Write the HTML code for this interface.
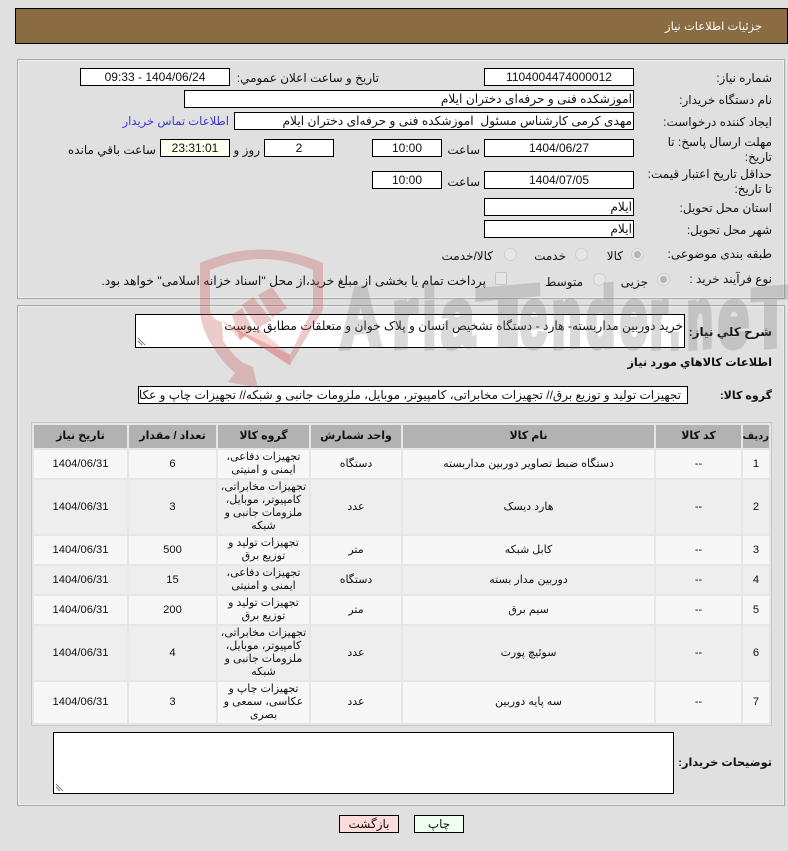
<!DOCTYPE html>
<html lang="fa" dir="rtl">
<head>
<meta charset="utf-8">
<title>جزئیات اطلاعات نیاز</title>
<style>
html,body{margin:0;padding:0}
body{position:relative;width:788px;height:851px;overflow:hidden;background:#e0e0e0;font-family:"Liberation Sans","DejaVu Sans",sans-serif;font-size:12px;color:#111}
.abs,.t,.box,.r,.panel{position:absolute}
.t{white-space:pre;line-height:16px;height:16px}
.panel{border:1px solid #a9a9a9;box-shadow:inset 0 0 0 1px #eee}
.box{box-sizing:border-box;background:#fff;border:1px solid #000;white-space:pre;overflow:hidden;text-align:center;line-height:17px;font-size:12px;height:18px}
.box.a{text-align:right;font-size:12.2px;padding-right:1px}
.b{font-weight:bold}
.r{width:11px;height:11px;border-radius:50%;background:#e6e6e6;border:1px solid #cfcfcf}
.r.c:after{content:"";position:absolute;left:2px;top:2px;width:7px;height:7px;border-radius:50%;background:#b4b4b4}
table{position:absolute;left:31px;top:422px;width:741px;table-layout:fixed;border-collapse:separate;border-spacing:2px;background:#e6e6e6;border:1px solid #c8c8c8;box-sizing:border-box;font-size:11px}
th,td{padding:0;text-align:center;overflow:hidden;line-height:13px}
th{background:#b2b2b2;height:23px;font-size:11px}
tr.o td{background:#f7f7f7}
tr.e td{background:#eee}
td.n{font-size:11.2px}
.grip{position:absolute;left:1px;bottom:1px}
.btn{position:absolute;box-sizing:border-box;top:815px;height:18px;border:1px solid #000;text-align:center;line-height:17px}
.wm text{font-family:"Liberation Sans",sans-serif;font-weight:bold;font-size:84px;fill:rgb(110,110,110);stroke:rgb(110,110,110);stroke-width:5px;vector-effect:non-scaling-stroke;direction:ltr}
</style>
</head>
<body>

<!-- header -->
<div class="abs" style="left:15px;top:8px;width:773px;height:36px;box-sizing:border-box;background:#8b6c42;border:1px solid #000"></div>
<div class="t" style="right:26px;top:19px;color:#fff;font-size:11.5px">جزئیات اطلاعات نیاز</div>

<!-- panels -->
<div class="panel" style="left:17px;top:59px;width:766px;height:238px;background:transparent"></div>
<div class="panel" style="left:17px;top:305px;width:766px;height:499px;background:transparent"></div>

<!-- labels -->
<div class="t" style="right:16px;top:70px">شماره نیاز:</div>
<div class="t" style="right:16px;top:92px">نام دستگاه خریدار:</div>
<div class="t" style="right:16px;top:114px">ایجاد کننده درخواست:</div>
<div class="t" style="right:16px;top:134px">مهلت ارسال پاسخ: تا</div>
<div class="t" style="right:16px;top:149px">تاریخ:</div>
<div class="t" style="right:16px;top:166px">حداقل تاریخ اعتبار قیمت:</div>
<div class="t" style="right:16px;top:181px">تا تاریخ:</div>
<div class="t" style="right:16px;top:200px">استان محل تحویل:</div>
<div class="t" style="right:16px;top:222px">شهر محل تحویل:</div>
<div class="t" style="right:16px;top:246px">طبقه بندی موضوعی:</div>
<div class="t" style="right:16px;top:271px">نوع فرآیند خرید :</div>

<!-- row 1 -->
<div class="box" style="left:484px;top:68px;width:150px">1104004474000012</div>
<div class="t" style="right:409px;top:70px">تاریخ و ساعت اعلان عمومي:</div>
<div class="box" style="left:80px;top:68px;width:150px">1404/06/24 - 09:33</div>

<!-- row 2 -->
<div class="box a" style="left:184px;top:90px;width:450px">اموزشکده فنی و حرفه‌ای دختران ایلام</div>

<!-- row 3 -->
<div class="box a" style="left:234px;top:112px;width:400px">مهدی کرمی کارشناس مسئول  اموزشکده فنی و حرفه‌ای دختران ایلام</div>
<div class="t" style="right:559px;top:114px;color:#3a35d0;font-size:11.6px">اطلاعات تماس خریدار</div>

<!-- row 4 -->
<div class="box" style="left:484px;top:139px;width:150px">1404/06/27</div>
<div class="t" style="right:308px;top:142px">ساعت</div>
<div class="box" style="left:372px;top:139px;width:70px">10:00</div>
<div class="box" style="left:264px;top:139px;width:70px">2</div>
<div class="t" style="right:528px;top:142px">روز و</div>
<div class="box" style="left:160px;top:139px;width:70px;background:#fffff0">23:31:01</div>
<div class="t" style="right:632px;top:142px">ساعت باقي مانده</div>

<!-- row 5 -->
<div class="box" style="left:484px;top:171px;width:150px">1404/07/05</div>
<div class="t" style="right:308px;top:174px">ساعت</div>
<div class="box" style="left:372px;top:171px;width:70px">10:00</div>

<!-- province / city -->
<div class="box a" style="left:484px;top:198px;width:150px">ایلام</div>
<div class="box a" style="left:484px;top:220px;width:150px">ایلام</div>

<!-- radios -->
<div class="r c" style="left:631px;top:248px"></div>
<div class="t" style="right:165px;top:248px">کالا</div>
<div class="r" style="left:575px;top:248px"></div>
<div class="t" style="right:222px;top:248px">خدمت</div>
<div class="r" style="left:504px;top:248px"></div>
<div class="t" style="right:295px;top:248px">کالا/خدمت</div>

<div class="r c" style="left:657px;top:273px"></div>
<div class="t" style="right:140px;top:274px">جزیی</div>
<div class="r" style="left:593px;top:273px"></div>
<div class="t" style="right:205px;top:274px">متوسط</div>
<div class="abs" style="left:495px;top:272px;width:10px;height:11px;background:#e6e6e6;border:1px solid #c4c4c4;border-radius:2px"></div>
<div class="t" style="right:302px;top:273px;font-size:12.35px">پرداخت تمام یا بخشی از مبلغ خرید،از محل "اسناد خزانه اسلامی" خواهد بود.</div>

<!-- description -->
<div class="t b" style="right:16px;top:324px">شرح کلي نیاز:</div>
<div class="box a" style="left:135px;top:314px;width:550px;height:34px;padding:3px 1px 0 0;line-height:16px">خرید دوربین مداربسته- هارد - دستگاه تشخیص انسان و پلاک خوان و متعلقات مطابق پیوست<svg class="grip" width="9" height="9" viewBox="0 0 9 9"><path d="M1 1L8 8M1 4L5 8" stroke="#777" fill="none"/></svg></div>
<div class="t b" style="right:16px;top:355px;font-size:11.4px">اطلاعات کالاهاي مورد نیاز</div>

<div class="t b" style="right:16px;top:388px;font-size:11px">گروه کالا:</div>
<div class="box a" style="left:138px;top:386px;width:550px;padding-right:6px;line-height:16px;font-size:12px">تجهیزات تولید و توزیع برق// تجهیزات مخابراتی، کامپیوتر، موبایل، ملزومات جانبی و شبکه// تجهیزات چاپ و عکاسی، سمعی و بصری</div>

<!-- table -->
<table>
<colgroup><col style="width:26px"><col style="width:85px"><col style="width:251px"><col style="width:90px"><col style="width:91px"><col style="width:87px"><col style="width:93px"></colgroup>
<tr><th style="font-size:10px">ردیف</th><th>کد کالا</th><th>نام کالا</th><th>واحد شمارش</th><th>گروه کالا</th><th>تعداد / مقدار</th><th>تاریخ نیاز</th></tr>
<tr class="o" style="height:28px"><td class="n">1</td><td>--</td><td>دستگاه ضبط تصاویر دوربین مداربسته</td><td>دستگاه</td><td>تجهیزات دفاعی، ایمنی و امنیتی</td><td class="n">6</td><td class="n">1404/06/31</td></tr>
<tr class="e" style="height:54px"><td class="n">2</td><td>--</td><td>هارد دیسک</td><td>عدد</td><td>تجهیزات مخابراتی، کامپیوتر، موبایل، ملزومات جانبی و شبکه</td><td class="n">3</td><td class="n">1404/06/31</td></tr>
<tr class="o" style="height:28px"><td class="n">3</td><td>--</td><td>کابل شبکه</td><td>متر</td><td>تجهیزات تولید و توزیع برق</td><td class="n">500</td><td class="n">1404/06/31</td></tr>
<tr class="e" style="height:28px"><td class="n">4</td><td>--</td><td>دوربین مدار بسته</td><td>دستگاه</td><td>تجهیزات دفاعی، ایمنی و امنیتی</td><td class="n">15</td><td class="n">1404/06/31</td></tr>
<tr class="o" style="height:28px"><td class="n">5</td><td>--</td><td>سیم برق</td><td>متر</td><td>تجهیزات تولید و توزیع برق</td><td class="n">200</td><td class="n">1404/06/31</td></tr>
<tr class="e" style="height:54px"><td class="n">6</td><td>--</td><td>سوئیچ پورت</td><td>عدد</td><td>تجهیزات مخابراتی، کامپیوتر، موبایل، ملزومات جانبی و شبکه</td><td class="n">4</td><td class="n">1404/06/31</td></tr>
<tr class="o" style="height:41px"><td class="n">7</td><td>--</td><td>سه پایه دوربین</td><td>عدد</td><td>تجهیزات چاپ و عکاسی، سمعی و بصری</td><td class="n">3</td><td class="n">1404/06/31</td></tr>
</table>

<!-- buyer notes -->
<div class="t b" style="right:16px;top:755px;font-size:11.3px">توضیحات خریدار:</div>
<div class="box a" style="left:53px;top:732px;width:621px;height:62px"><svg class="grip" width="9" height="9" viewBox="0 0 9 9"><path d="M1 1L8 8M1 4L5 8" stroke="#777" fill="none"/></svg></div>

<!-- buttons -->
<div class="btn" style="left:339px;width:60px;background:#ffdcdc">بازگشت</div>
<div class="btn" style="left:414px;width:50px;background:#efffef">چاپ</div>

<!-- watermark overlay -->
<svg class="abs wm" style="left:0;top:0;pointer-events:none" width="788" height="851" viewBox="0 0 788 851" direction="ltr">
  <g opacity=".25">
  <text transform="translate(340,348) skewY(-5) scale(.68,1)">A</text>
  <text transform="translate(392,348) skewY(-5) scale(.78,1)">r</text>
  <text transform="translate(423,348) skewY(-5) scale(.55,1)">i</text>
  <text transform="translate(441,348) skewY(-5) scale(.71,1)">a</text>
  <text transform="translate(477,348) skewY(-5) scale(1.2,1)">T</text>
  <text transform="translate(520,348) skewY(-5) scale(.58,1)">e</text>
  <text transform="translate(552,348) skewY(-5) scale(.57,1)">n</text>
  <text transform="translate(586,348) skewY(-5) scale(.57,1)">d</text>
  <text transform="translate(620,348) skewY(-5) scale(.58,1)">e</text>
  <text transform="translate(650,348) skewY(-5) scale(.54,1)">r</text>
  <text transform="translate(670,348) skewY(-5) scale(.42,1)">.</text>
  <text transform="translate(687,348) skewY(-5) scale(.5,1)">n</text>
  <text transform="translate(718,348) skewY(-5) scale(.66,1)">e</text>
  <text transform="translate(752,348) skewY(-5) scale(.72,1)">T</text>
  </g>
  <path fill="rgb(200,84,84)" fill-opacity=".3" fill-rule="evenodd" d="M200 263Q262 236 323 263V310L290 365L222 322L223 340Q232 355 243 363L235 373Q222 362 213 347Q202 330 200 313Z M210 270V310Q212 320 222 322L290 355L313 308V270Q262 248 210 270Z"/>
  <path fill="rgb(230,120,120)" fill-opacity=".3" d="M222 320L240 340L258 328L290 355V366Z"/>
  <path fill="rgb(200,84,84)" fill-opacity=".3" d="M253 367L258 388L228 382L243 363Z"/>
  <path fill="rgb(200,84,84)" fill-opacity=".3" d="M232 315L242 308L253 330L240 340Z M242 305L253 297L272 320L258 328Z M258 295L272 287L287 308L272 318Z"/>
</svg>

</body>
</html>
